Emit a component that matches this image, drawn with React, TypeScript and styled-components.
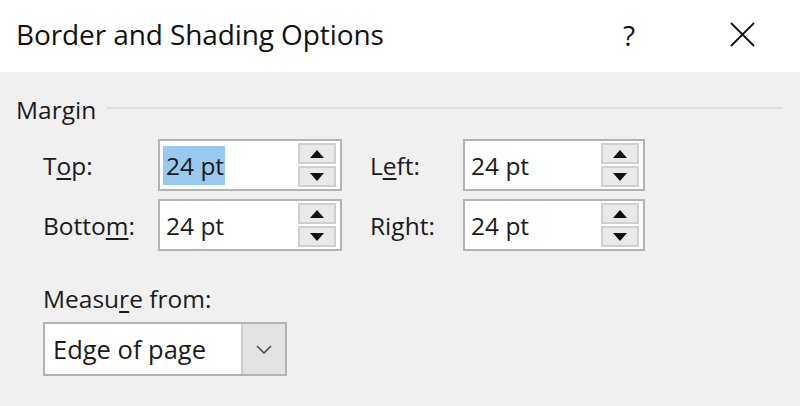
import React from "react";
import styled, { createGlobalStyle } from "styled-components";

const Global = createGlobalStyle`
  html, body { margin: 0; padding: 0; background: #f0f0f0; }
  body { font-family: "Open Sans", "Noto Sans", sans-serif; color: #1b1b1b; }
`;

const Dialog = styled.div`
  width: 800px;
  height: 406px;
  background: #f0f0f0;
  display: flex;
  flex-direction: column;
  overflow: hidden;
`;

const TitleBar = styled.div`
  height: 72px;
  background: #ffffff;
  display: flex;
  align-items: center;
  padding: 0 26px 0 16px;
  box-sizing: border-box;
`;

const Title = styled.div`
  flex: 1;
  font-size: 28px;
  letter-spacing: -0.1px;
  color: #111;
  margin-top: -4px;
`;

const TitleButton = styled.div<{ $w: number; $after?: number }>`
  width: ${(p) => p.$w}px;
  margin-right: ${(p) => p.$after ?? 0}px;
  display: flex;
  justify-content: center;
  align-items: center;
  font-size: 28px;
  color: #111;
  margin-top: -3px;
`;

const Body = styled.div`
  padding: 20px 17px 0 16px;
  display: flex;
  flex-direction: column;
`;

const GroupHeader = styled.div`
  display: flex;
  align-items: center;
  font-size: 24.5px;
  height: 34px;
`;

const GroupRule = styled.div`
  flex: 1;
  height: 2px;
  margin: 0 0 3px 11px;
  background: #dddddd;
`;

const FieldGrid = styled.div`
  display: grid;
  grid-template-columns: 115px 184px 28px 93px 182px;
  grid-auto-rows: 52px;
  row-gap: 8px;
  margin: 13px 0 0 27px;
  align-items: center;
`;

const Label = styled.div`
  font-size: 24.5px;
  line-height: 32px;
  margin-top: 2px;
`;

const Key = styled.span`
  text-decoration: underline;
  text-underline-offset: 3px;
  text-decoration-thickness: 1.5px;
`;

const SpinBox = styled.div`
  height: 52px;
  box-sizing: border-box;
  border: 2px solid #b3b3b3;
  background: #ffffff;
  display: flex;
  align-items: center;
  padding: 0 4px 0 3px;
`;

const Value = styled.div`
  flex: 1;
  font-size: 24.5px;
  display: flex;
  align-items: center;
`;

const Selected = styled.span<{ $on?: boolean }>`
  background: ${(p) => (p.$on ? "#99c9ef" : "transparent")};
  padding: 0 1px 0 3px;
  line-height: 39px;
`;

const Spinner = styled.div`
  width: 38px;
  display: flex;
  flex-direction: column;
  gap: 2px;
`;

const SpinButton = styled.div`
  height: 21px;
  box-sizing: border-box;
  border: 2px solid #cfcfcf;
  background: #e9e9e9;
  display: flex;
  align-items: center;
  justify-content: center;
`;

const Arrow = ({ up }: { up?: boolean }) => (
  <svg width="14" height="8" viewBox="0 0 14 8">
    <polygon points={up ? "7,0 14,8 0,8" : "0,0 14,0 7,8"} fill="#111" />
  </svg>
);

const Spin = ({ value, selected }: { value: string; selected?: boolean }) => (
  <SpinBox>
    <Value>
      <Selected $on={selected}>{value}</Selected>
    </Value>
    <Spinner>
      <SpinButton>
        <Arrow up />
      </SpinButton>
      <SpinButton>
        <Arrow />
      </SpinButton>
    </Spinner>
  </SpinBox>
);

const Gap = styled.div``;

const MeasureBlock = styled.div`
  margin: 30px 0 0 27px;
  display: flex;
  flex-direction: column;
  gap: 7px;
`;

const Select = styled.div`
  width: 244px;
  height: 54px;
  box-sizing: border-box;
  border: 2px solid #b3b3b3;
  background: #fff;
  display: flex;
`;

const SelectText = styled.div`
  flex: 1;
  font-size: 25.5px;
  display: flex;
  align-items: center;
  padding-left: 8px;
  margin-top: -1px;
`;

const SelectButton = styled.div`
  width: 42px;
  background: #e3e3e3;
  border-left: 2px solid #cccccc;
  display: flex;
  align-items: center;
  justify-content: center;
`;

export default function App() {
  return (
    <Dialog>
      <Global />
      <TitleBar>
        <Title>Border and Shading Options</Title>
        <TitleButton $w={30} $after={66}>?</TitleButton>
        <TitleButton $w={64}>
          <svg width="25" height="25" viewBox="0 0 25 25">
            <path d="M1 1 L24 24 M24 1 L1 24" stroke="#111" strokeWidth="1.8" />
          </svg>
        </TitleButton>
      </TitleBar>
      <Body>
        <GroupHeader>
          Margin
          <GroupRule />
        </GroupHeader>
        <FieldGrid>
          <Label>
            T<Key>o</Key>p:
          </Label>
          <Spin value="24 pt" selected />
          <Gap />
          <Label>
            L<Key>e</Key>ft:
          </Label>
          <Spin value="24 pt" />
          <Label>
            Botto<Key>m</Key>:
          </Label>
          <Spin value="24 pt" />
          <Gap />
          <Label>
            Ri<Key>g</Key>ht:
          </Label>
          <Spin value="24 pt" />
        </FieldGrid>
        <MeasureBlock>
          <Label>
            Measu<Key>r</Key>e from:
          </Label>
          <Select>
            <SelectText>Edge of page</SelectText>
            <SelectButton>
              <svg width="16" height="9" viewBox="0 0 16 9">
                <path d="M1 1 L8 8 L15 1" stroke="#444" strokeWidth="1.5" fill="none" />
              </svg>
            </SelectButton>
          </Select>
        </MeasureBlock>
      </Body>
    </Dialog>
  );
}
